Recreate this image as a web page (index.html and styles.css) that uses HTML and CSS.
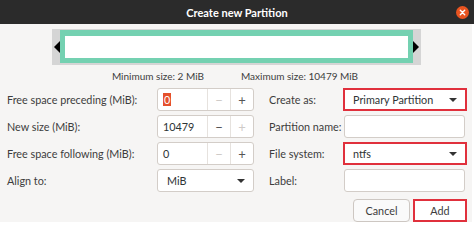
FILE: index.html
```html
<!DOCTYPE html>
<html lang="en">
<head>
    <meta charset="UTF-8">
    <title>Create new Partition</title>
    <link rel="stylesheet" href="styles.css">
</head>
<body>
    <div class="dialog">
        <div class="titlebar">
            <span></span>
            <span class="title">Create new Partition</span>
            <span class="close-btn">
                <svg width="13" height="13" viewBox="0 0 13 13">
                    <circle cx="6.5" cy="6.5" r="6.5" fill="#e95420"/>
                    <path d="M4.3 4.3 L8.7 8.7 M8.7 4.3 L4.3 8.7" stroke="#fff" stroke-width="1.4" stroke-linecap="round"/>
                </svg>
            </span>
        </div>

        <div class="content">
            <div class="slider-row">
                <div class="slider">
                    <span class="arrow arrow-left"></span>
                    <div class="bar"></div>
                    <span class="arrow arrow-right"></span>
                </div>
            </div>

            <div class="sizes">
                <span>Minimum size: 2 MiB</span>
                <span>Maximum size: 10479 MiB</span>
            </div>

            <div class="form-grid">
                <label class="label">Free space preceding (MiB):</label>
                <div class="spin">
                    <span class="spin-value"><span class="selected">0</span></span>
                    <span class="spin-btn off">&minus;</span>
                    <span class="spin-btn">+</span>
                </div>
                <label class="label">Create as:</label>
                <div class="combo marked">
                    <span>Primary Partition</span>
                    <span class="caret"></span>
                </div>

                <label class="label">New size (MiB):</label>
                <div class="spin">
                    <span class="spin-value">10479</span>
                    <span class="spin-btn">&minus;</span>
                    <span class="spin-btn off">+</span>
                </div>
                <label class="label">Partition name:</label>
                <div class="entry"></div>

                <label class="label">Free space following (MiB):</label>
                <div class="spin">
                    <span class="spin-value">0</span>
                    <span class="spin-btn off">&minus;</span>
                    <span class="spin-btn">+</span>
                </div>
                <label class="label">File system:</label>
                <div class="combo marked">
                    <span>ntfs</span>
                    <span class="caret"></span>
                </div>

                <label class="label">Align to:</label>
                <div class="combo">
                    <span>MiB</span>
                    <span class="caret"></span>
                </div>
                <label class="label">Label:</label>
                <div class="entry"></div>
            </div>

            <div class="actions">
                <button class="btn">Cancel</button>
                <button class="btn marked">Add</button>
            </div>
        </div>
    </div>
</body>
</html>
```

FILE: styles.css
```css
* {
    margin: 0;
    padding: 0;
    box-sizing: border-box;
}

body {
    background: #ffffff;
    font-family: 'Lato', 'Noto Sans', sans-serif;
    font-size: 10.8px;
    color: #3d3d3d;
    width: 474px;
    height: 226px;
    overflow: hidden;
}

.titlebar {
    height: 24px;
    background: #2b2b2b;
    display: grid;
    grid-template-columns: 1fr auto 1fr;
    align-items: center;
}

.title {
    color: #ffffff;
    font-weight: bold;
    font-size: 11px;
}

.close-btn {
    justify-self: end;
    display: flex;
    margin-right: 5px;
}

.content {
    width: 472px;
    height: 198px;
    background: #f6f5f4;
    padding-top: 5px;
}

.slider-row {
    display: flex;
    justify-content: center;
}

.slider {
    width: 369px;
    height: 36px;
    background: #d5d5d5;
    display: flex;
    align-items: center;
    margin-left: 1px;
}

.arrow {
    width: 7px;
    height: 12px;
    border-top: 6px solid transparent;
    border-bottom: 6px solid transparent;
}

.arrow-left {
    border-right: 6px solid #000;
    margin-left: 1px;
    width: 7px;
}

.arrow-right {
    border-left: 6px solid #000;
    width: 8px;
}

.bar {
    flex: 1;
    align-self: flex-start;
    margin-top: 1px;
    height: 33px;
    background: #ffffff;
    border: 5px solid #74d1b1;
    border-top-width: 6px;
}

.sizes {
    display: flex;
    justify-content: center;
    gap: 37px;
    height: 22px;
    line-height: 22px;
    font-size: 10px;
    padding-right: 2px;
    white-space: nowrap;
}

.form-grid {
    display: grid;
    grid-template-columns: 150px 97px 89px 124px;
    grid-template-rows: repeat(4, 23px);
    row-gap: 4px;
    margin-left: 7px;
    margin-top: 1px;
    align-items: center;
}

.label {
    white-space: nowrap;
}

.label:nth-child(4n + 3) {
    padding-left: 15px;
}

.spin,
.combo,
.entry {
    height: 23px;
    background: #ffffff;
    border: 1px solid #d3cdc8;
    border-radius: 3px;
    display: flex;
    align-items: center;
    color: #2e3436;
}

.spin-value {
    flex: 1;
    padding-left: 5px;
}

.selected {
    background: #e5502c;
    color: #ffffff;
    padding: 0 1px;
}

.spin-btn {
    width: 23px;
    height: 100%;
    border-left: 1px solid #e6e2de;
    display: flex;
    align-items: center;
    justify-content: center;
    font-size: 13px;
    color: #555;
}

.spin-btn.off {
    color: #cfcbc8;
}

.combo {
    justify-content: space-between;
    padding: 0 8px 0 9px;
}

.combo.marked {
    border: 2px solid #e0303c;
    border-radius: 0;
    padding-left: 8px;
}

.entry {
    margin-right: 2px;
    margin-left: 1px;
}

.caret {
    width: 0;
    height: 0;
    border-left: 4px solid transparent;
    border-right: 4px solid transparent;
    border-top: 4px solid #333;
}

.actions {
    display: flex;
    justify-content: flex-end;
    gap: 3px;
    margin-top: 7px;
    padding-right: 5px;
}

.btn {
    height: 23px;
    width: 57px;
    font-family: inherit;
    font-size: 10.8px;
    color: #3d3d3d;
    background: #fafafa;
    border: 1px solid #cdc7c2;
    border-radius: 4px;
}

.btn.marked {
    width: 54px;
    background: #ffffff;
    border: 2px solid #e0303c;
    border-radius: 0;
}
```
